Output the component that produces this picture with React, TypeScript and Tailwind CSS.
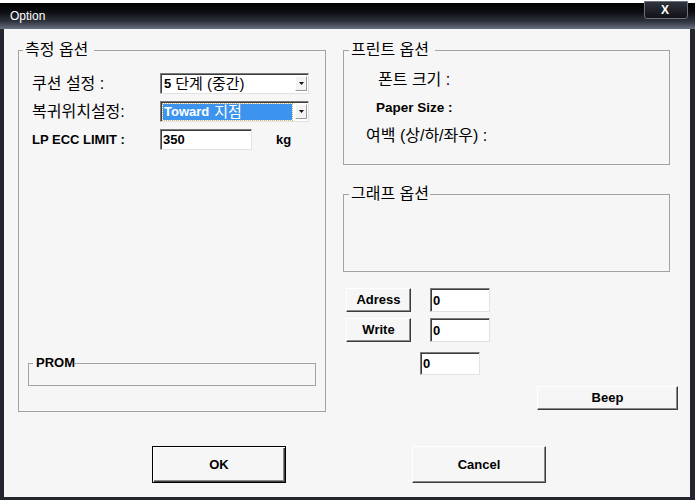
import type { ReactNode } from "react";

const FONT = "font-['Liberation_Sans','Noto_Sans_CJK_KR',sans-serif]";

function Group({
  title,
  className,
  legendClass,
  children,
}: {
  title: string;
  className: string;
  legendClass: string;
  children?: ReactNode;
}) {
  return (
    <fieldset className={`border border-[#a3a3a3] ${className}`}>
      <legend className={legendClass}>{title}</legend>
      {children}
    </fieldset>
  );
}

function Combo({ selected, children }: { selected?: boolean; children: ReactNode }) {
  return (
    <div className="flex h-[21px] w-[149px] items-center border border-t-[#7b7b7b] border-l-[#7b7b7b] border-r-[#e2e2e2] border-b-[#e2e2e2] bg-white pl-[2px] pr-[1px] shadow-[inset_1px_1px_0_#3c3c3c]">
      <div
        className={
          selected
            ? "flex h-[16px] flex-1 items-center bg-[#3d94ee] pl-[1px] text-[13px] leading-none text-white outline-1 outline-dotted outline-[#c9b77a]"
            : "flex h-[16px] flex-1 items-center pl-[1px] text-[13px] leading-none"
        }
      >
        {children}
      </div>
      <div className="ml-[3px] flex h-[15px] w-[12px] items-center justify-center border border-t-white border-l-white border-r-[#9a9a9a] border-b-[#9a9a9a] bg-[#f3f3f3]">
        <svg width="5" height="3" viewBox="0 0 5 3">
          <path d="M0 0h5L2.5 3z" fill="#111" />
        </svg>
      </div>
    </div>
  );
}

function Field({ className, value }: { className: string; value: string }) {
  return (
    <div
      className={`flex items-center border border-t-[#7b7b7b] border-l-[#7b7b7b] border-r-[#e2e2e2] border-b-[#e2e2e2] bg-white pl-[2px] text-[13px] font-bold leading-none shadow-[inset_1px_1px_0_#3c3c3c] ${className}`}
    >
      {value}
    </div>
  );
}

function Button({ className, label, primary }: { className: string; label: string; primary?: boolean }) {
  return (
    <div
      className={
        primary
          ? `flex items-center justify-center border border-black bg-[#f6f6f6] text-[13px] font-bold shadow-[inset_1px_1px_0_#ffffff,inset_-1px_-1px_0_#3c3c3c,inset_-2px_-2px_0_#8a8a8a] ${className}`
          : `flex items-center justify-center border border-t-white border-l-white border-r-[#3c3c3c] border-b-[#3c3c3c] bg-[#f6f6f6] text-[13px] font-bold shadow-[inset_-1px_-1px_0_#8a8a8a] ${className}`
      }
    >
      {label}
    </div>
  );
}

export default function App() {
  const legend = "ml-[5px] pl-[2px] pr-[6px] text-[16px] leading-[20px]";
  return (
    <div className={`h-[502px] w-[696px] bg-white pb-[2px] pr-[1px] pt-[3px] text-black ${FONT}`}>
      <div className="flex h-full flex-col bg-[#23262e]">
        {/* title bar */}
        <div className="flex h-[26px] shrink-0 items-start bg-[linear-gradient(to_bottom,#000000_0%,#0c0e12_35%,#2d323d_70%,#68707f_100%)]">
          <span className="ml-[10px] mt-[6px] text-[12px] leading-[14px] text-white">Option</span>
          <div className="-mt-[2px] ml-auto mr-[7px] flex h-[18px] w-[44px] items-center justify-center rounded-b-[3px] border border-[#6b7180] bg-[linear-gradient(to_bottom,#30343e,#101217)] pr-[2px] text-[12px] font-bold leading-none text-white">
            X
          </div>
        </div>

        {/* body */}
        <div className="mb-[3px] ml-[4px] mr-[5px] flex-1 bg-[#f6f6f6]">
          <div className="flex pl-[14px] pt-[11px]">
            <Group title="측정 옵션" className="h-[372px] w-[308px]" legendClass="ml-[4px] pl-[2px] pr-[6px] text-[16px] leading-[20px]">
              <div className="mt-[13px] flex flex-col gap-[7px] pl-[13px]">
                <div className="flex h-[21px] items-center">
                  <span className="w-[128px] text-[16px]">쿠션 설정 :</span>
                  <Combo>
                    <span className="font-bold">5</span>
                    <span className="ml-[4px] text-[15px]">단계 (중간)</span>
                  </Combo>
                </div>
                <div className="flex h-[21px] items-center">
                  <span className="w-[128px] text-[16px]">복귀위치설정:</span>
                  <Combo selected>
                    <span className="font-bold">Toward</span>
                    <span className="ml-[5px] text-[15px]">지점</span>
                  </Combo>
                </div>
                <div className="flex h-[21px] items-center">
                  <span className="w-[128px] text-[13px] font-bold">LP ECC LIMIT :</span>
                  <Field className="h-[21px] w-[92px]" value="350" />
                  <span className="ml-[24px] text-[13px] font-bold">kg</span>
                </div>
              </div>
              <Group
                title="PROM"
                className="mx-[9px] mt-[206px] h-[30px]"
                legendClass="ml-[4px] pl-[3px] text-[13px] font-bold leading-[14px]"
              />
            </Group>

            <div className="ml-[17px] flex w-[327px] flex-col">
              <Group title="프린트 옵션" className="h-[125px]" legendClass={legend}>
                <div className="mt-[6px] flex flex-col">
                  <div className="flex h-[28px] items-center pl-[34px] text-[16px]">폰트 크기 :</div>
                  <div className="flex h-[28px] items-center pl-[32px] text-[13.5px] font-bold">Paper Size :</div>
                  <div className="flex h-[28px] items-center pl-[22px] text-[16px]">여백 (상/하/좌우) :</div>
                </div>
              </Group>
              <Group title="그래프 옵션" className="mt-[19px] h-[88px]" legendClass="ml-[5px] pl-[2px] pr-[1px] text-[16px] leading-[20px]" />

              <div className="mt-[16px] flex">
                <Button className="ml-[3px] h-[24px] w-[65px]" label="Adress" />
                <Field className="ml-[19px] h-[24px] w-[60px]" value="0" />
              </div>
              <div className="mt-[6px] flex">
                <Button className="ml-[3px] h-[24px] w-[65px]" label="Write" />
                <Field className="ml-[19px] h-[24px] w-[60px]" value="0" />
              </div>
              <Field className="ml-[77px] mt-[10px] h-[23px] w-[60px]" value="0" />
              <Button className="ml-[194px] mt-[11px] h-[24px] w-[141px]" label="Beep" />
            </div>
          </div>

          <div className="mt-[34px] flex">
            <Button primary className="ml-[148px] h-[37px] w-[134px]" label="OK" />
            <Button className="ml-[126px] h-[37px] w-[134px]" label="Cancel" />
          </div>
        </div>
      </div>
    </div>
  );
}
